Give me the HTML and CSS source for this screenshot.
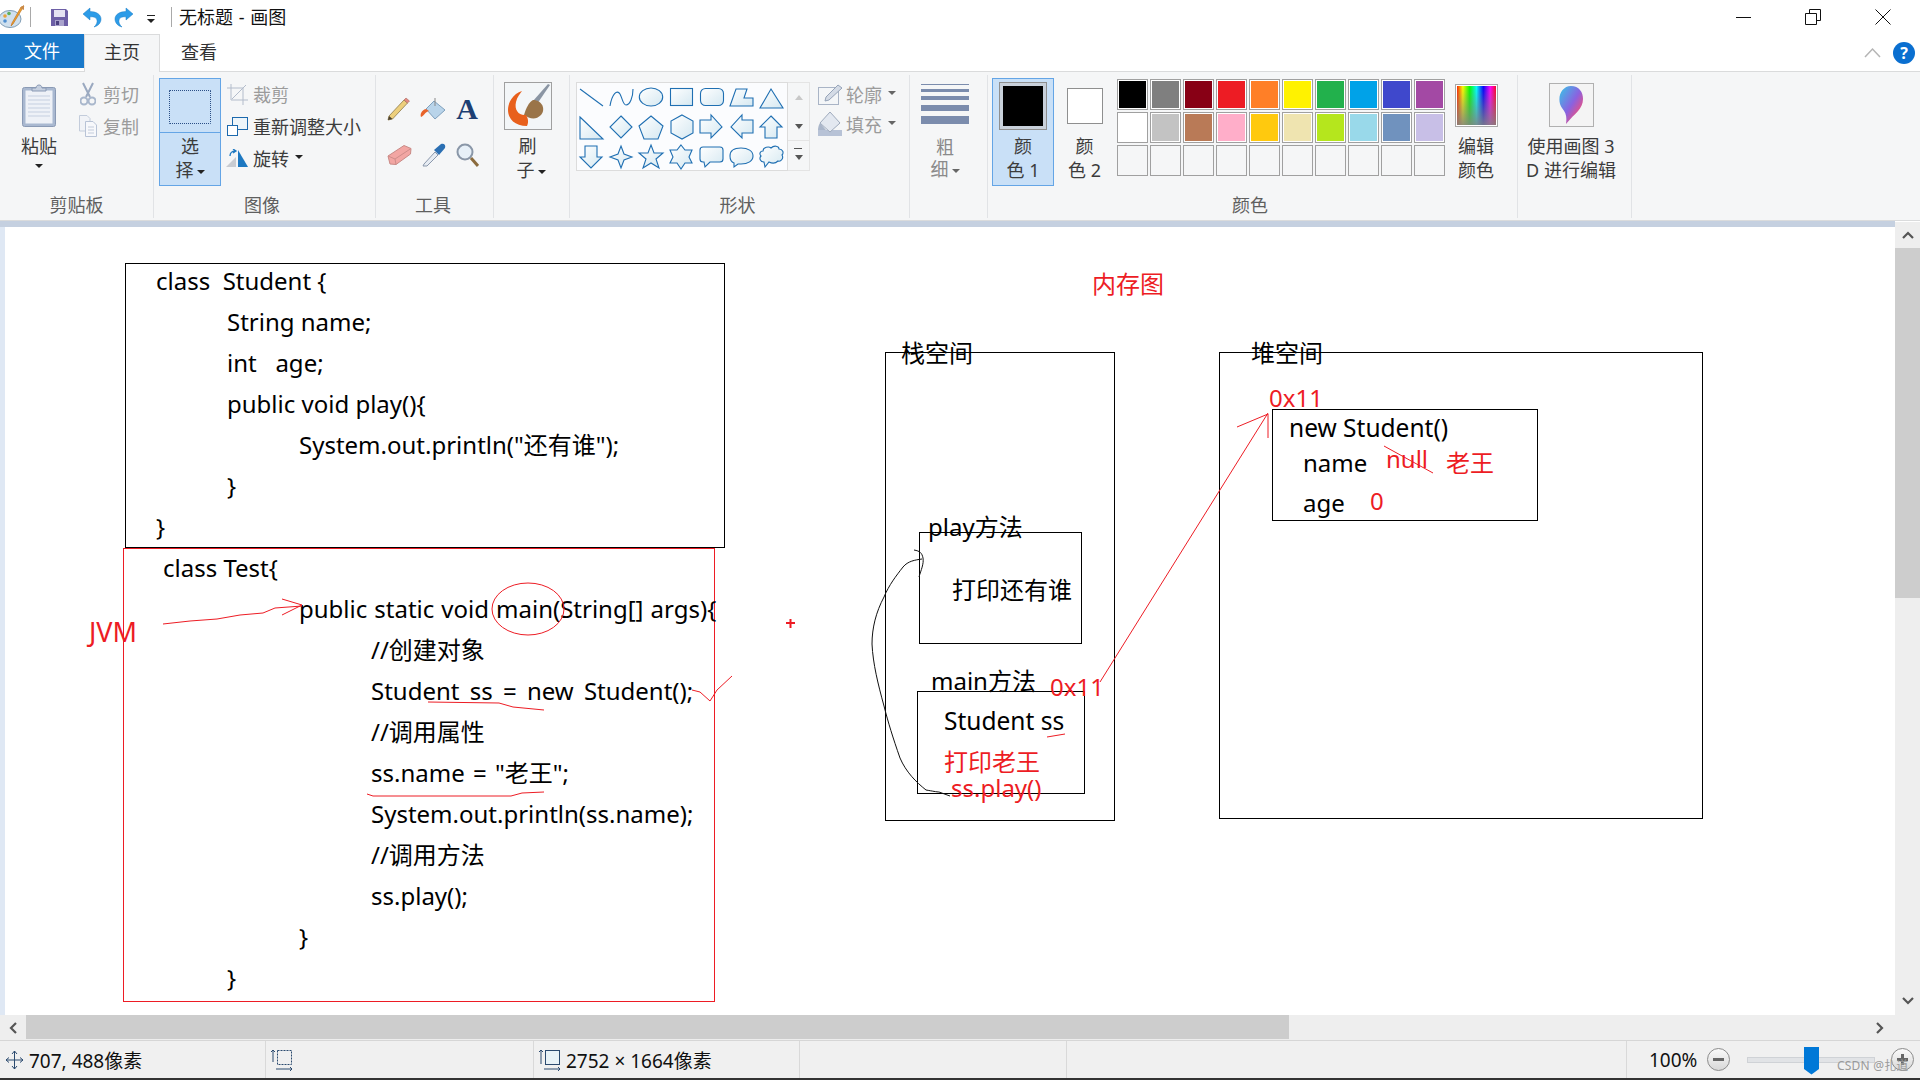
FILE: index.html
```html
<!DOCTYPE html>
<html lang="zh">
<head>
<meta charset="utf-8">
<title>无标题 - 画图</title>
<link rel="stylesheet" href="styles.css">
</head>
<body>
<div class="app">
  <header class="titlebar">
    <svg class="qa-paint" width="26" height="24" viewBox="0 0 26 24"><ellipse cx="10" cy="14" rx="11" ry="8.5" fill="#cfe0ee" stroke="#7f9db5"/><circle cx="5" cy="11" r="1.8" fill="#e8a33a"/><circle cx="9" cy="8.5" r="1.8" fill="#5fae5a"/><circle cx="5" cy="16" r="1.8" fill="#4f8ed0"/><circle cx="11" cy="18" r="1.8" fill="#d8d8e8"/><path d="M24 1 L13 19 L11 21 L12 18 L21 2Z" fill="#f0a030" stroke="#b96a10" stroke-width=".6"/><path d="M20 3 L24 0 L24 5Z" fill="#c98a4a"/></svg>
    <span class="qa-sep qa-sep-a"></span>
    <svg class="qa-save" width="17" height="17" viewBox="0 0 17 17"><path d="M0 0H15L17 2V17H0Z" fill="#6d5fa6"/><rect x="3" y="1" width="11" height="7" fill="#e4e2f2"/><rect x="4" y="11" width="9" height="6" fill="#a9a3cc"/><rect x="5" y="12" width="3" height="4" fill="#4c4180"/></svg>
    <svg class="qa-undo" width="20" height="21" viewBox="0 0 20 21"><path d="M1 7 L8 1 V4.500 C15 4.500 19 8 19 12 C19 16 16 19 12 20 C14.500 18 15.500 15 15 13 C14.500 10.500 12 9.500 8 9.800 V13Z" fill="#2d9ce8" stroke="#1a7cc4" stroke-width=".5"/></svg>
    <svg class="qa-redo" width="20" height="21" viewBox="0 0 20 21"><path d="M19 7 L12 1 V4.500 C5 4.500 1 8 1 12 C1 16 4 19 8 20 C5.500 18 4.500 15 5 13 C5.500 10.500 8 9.500 12 9.800 V13Z" fill="#2d9ce8" stroke="#1a7cc4" stroke-width=".5"/></svg>
    <svg class="qa-drop" width="9" height="10" viewBox="0 0 9 10"><rect x="0" y="0" width="8" height="1" fill="#222"/><path d="M0 4H8L4 8Z" fill="#222"/></svg>
    <span class="qa-sep qa-sep-b"></span>
    <span class="doc-title">无标题 - 画图</span>
    <div class="win-controls">
      <svg width="16" height="16" viewBox="0 0 16 16"><path d="M0 8.500H15" stroke="#111" fill="none"/></svg>
      <svg class="win-restore" width="16" height="16" viewBox="0 0 16 16"><path d="M.5 4.500H11.500V15.500H.5Z M4.500 4.500V.5H15.500V11.500H11.500" stroke="#111" fill="none"/></svg>
      <svg width="16" height="16" viewBox="0 0 16 16"><path d="M.5 .5L15.500 15.500M15.500 .5L.5 15.500" stroke="#111" fill="none"/></svg>
    </div>
  </header>

  <nav class="tabs">
    <span class="tab-file">文件</span>
    <span class="tab-home">主页</span>
    <span class="tab-view">查看</span>
    <div class="tabs-right">
      <svg width="17" height="11" viewBox="0 0 17 11"><path d="M1 10L8.500 2L16 10" stroke="#b5b5b5" stroke-width="1.500" fill="none"/></svg>
      <span class="help">?</span>
    </div>
  </nav>

  <section class="ribbon">
    <div class="group g-clip">
      <div class="body">
        <div class="big paste">
          <svg class="i-paste" width="34" height="43" viewBox="0 0 34 43"><rect x=".5" y="3.500" width="33" height="39" rx="2" fill="#a9b8d0" stroke="#8a9ab5"/><rect x="3.500" y="6.500" width="27" height="33" fill="#eef1f7"/><path d="M6 12H28M6 16H28M6 20H28M6 24H28M6 28H28M6 32H28" stroke="#c5cfe0"/><path d="M10 7V4H14C14 0 20 0 20 4H24V7Z" fill="#c5cfdf" stroke="#8a9ab5"/></svg>
          <span class="big-line">粘贴</span>
          <span class="caret caret-paste"></span>
        </div>
        <div class="small-col col-clip">
          <div class="small off"><span class="ico"><svg width="16" height="24" viewBox="0 0 16 24"><path d="M3 1L10 15M13 1L6 15" stroke="#9aa9c0" stroke-width="2" fill="none"/><circle cx="4" cy="19" r="3.500" fill="none" stroke="#a9b7cc" stroke-width="2"/><circle cx="12" cy="19" r="3.500" fill="none" stroke="#a9b7cc" stroke-width="2"/></svg></span><span>剪切</span></div>
          <div class="small off"><span class="ico"><svg width="18" height="22" viewBox="0 0 18 22"><path d="M.5 .5H8L11 3.500V16H.5Z" fill="#f1f3f7" stroke="#c3ccdb"/><path d="M6.500 6.500H14L17.500 10V21.500H6.500Z" fill="#f7f8fb" stroke="#b8c3d6"/><path d="M9 12H15M9 15H15M9 18H15" stroke="#c3ccdb"/></svg></span><span>复制</span></div>
        </div>
      </div>
      <div class="label">剪贴板</div>
    </div>

    <div class="group g-image">
      <div class="body">
        <div class="select">
          <div class="select-top"><span class="marquee"></span></div>
          <div class="select-bottom"><span class="big-line">选</span><span class="big-line">择<span class="caret caret-inline"></span></span></div>
        </div>
        <div class="small-col col-image">
          <div class="small off"><span class="ico"><svg width="21" height="21" viewBox="0 0 21 21"><path d="M4 0V16H21M0 4H16V21" fill="none" stroke="#b3bccb" stroke-width="1"/><path d="M5 15L19 1" stroke="#b3bccb"/></svg></span><span>裁剪</span></div>
          <div class="small"><span class="ico"><svg width="21" height="19" viewBox="0 0 21 19"><rect x="5.500" y=".5" width="15" height="12" fill="#edf5fa" stroke="#1c69ad"/><rect x=".5" y="8.500" width="10" height="10" fill="#fff" stroke="#1c69ad"/></svg></span><span>重新调整大小</span></div>
          <div class="small"><span class="ico"><svg width="24" height="19" viewBox="0 0 24 19"><path d="M1 18L11 8V18Z" fill="#c9ccd2"/><path d="M13 1V18H23Z" fill="#1d78c1"/><path d="M5 7C5 4 7 2 10 2M8 0L11 2L8 4" fill="none" stroke="#1d78c1" stroke-width="1.300"/></svg></span><span>旋转</span><span class="caret caret-side"></span></div>
        </div>
      </div>
      <div class="label">图像</div>
    </div>

    <div class="group g-tools">
      <div class="body tool-grid">
        <svg width="24" height="24" viewBox="0 0 24 24"><path d="M2 19L17 3L20.500 6L5.500 22L1 23Z" fill="#edcf7c" stroke="#8d7a4a" stroke-width=".8"/><path d="M17 3L19 1L22.500 4L20.500 6Z" fill="#e58a80" stroke="#a8685f" stroke-width=".6"/><path d="M1 23L2 19L5.500 22Z" fill="#4a4030"/></svg>
        <svg width="26" height="24" viewBox="0 0 26 24"><path d="M14 4L25 13L15 22L6 12Z" fill="#b9d4ea" stroke="#7fa0bd"/><path d="M6 12C1 13 0 18 1 20C4 19 5 15 9 14Z" fill="#e8632a"/><path d="M15 1V9" stroke="#888"/></svg>
        <span class="tool-a">A</span>
        <svg width="25" height="22" viewBox="0 0 25 22"><path d="M1 12L17 1.500L24 4.500L23.500 10L9 20.500L3 20Z" fill="#f2a6a3" stroke="#c98a86"/><path d="M1 12L8 15L24 4.500M8 15L9 20.500" fill="none" stroke="#cf8d8a"/></svg>
        <svg width="25" height="24" viewBox="0 0 25 24"><path d="M3 21L14 9L17 12L6 23L2 23Z" fill="#e6ebf2" stroke="#8b98ac"/><path d="M13 7L20 1C23 0 25 2 24 5L18 12Z" fill="#2b6fb3"/></svg>
        <svg width="23" height="24" viewBox="0 0 23 24"><circle cx="9" cy="9" r="7.500" fill="#e7f0f8" stroke="#8a97a8" stroke-width="2"/><path d="M15 15L22 23" stroke="#8b6b3d" stroke-width="3"/></svg>
      </div>
      <div class="label label-tools">工具</div>
    </div>

    <div class="group g-brush">
      <div class="body big-col brush">
        <svg class="i-brush" width="48" height="48" viewBox="0 0 48 48"><rect x=".5" y=".5" width="47" height="47" fill="#f3f6f8" stroke="#a0a0a0"/><path d="M46 3L33 22L29 19L44 2Z" fill="#8a95a3"/><path d="M29 18C38 18 42 27 37 33C31 39 25 36 20 33C22 26 25 20 29 18Z" fill="#9a7448"/><path d="M18 9C9 12 4 20 4 28C4 37 11 44 23 44C25 40 24 36 22 33C15 34 10 28 12 20C13 15 16 12 18 9Z" fill="#e8601c"/></svg>
        <span class="big-line">刷</span>
        <span class="big-line brush-line">子<span class="caret caret-inline"></span></span>
      </div>
      <div class="label">&nbsp;</div>
    </div>

    <div class="group g-shapes">
      <div class="body">
        <div class="gallery">
          <svg class="shape-svg" width="210" height="87" viewBox="0 0 210 87">
            <defs><linearGradient id="sg" x1="0" y1="0" x2="1" y2="1"><stop offset="0" stop-color="#ffffff"/><stop offset="1" stop-color="#d5e8f1"/></linearGradient></defs>
            <g fill="url(#sg)" stroke="#1f6fb2" stroke-width="1.100" transform="translate(-1,-1)">
              <path d="M4 7L27 24" fill="none"/>
              <path d="M34 24C36 12 41 7 44 12C47 18 47 23 50 23C54 23 57 15 57 7" fill="none"/>
              <ellipse cx="75" cy="15" rx="11.700" ry="9"/>
              <rect x="94.500" y="6.500" width="22" height="17"/>
              <rect x="124.500" y="6.500" width="23" height="17" rx="5"/>
              <path d="M154 24L160 7H171L168 16H177V24Z"/>
              <path d="M195 7L207 26H184Z"/>
              <path d="M4 35L27 57H4Z"/>
              <path d="M45 34L56 45L45 56L34 45Z"/>
              <path d="M75 34L87 44L82 57H68L63 44Z"/>
              <path d="M106 33L117 39V51L106 57L95 51V39Z"/>
              <path d="M124 38H135V33L146 45L135 56V51H124Z"/>
              <path d="M177 38H166V33L155 45L166 56V51H177Z"/>
              <path d="M195 34L206 45H201V56H189V45H184Z"/>
              <path d="M9 64H21V75H26L15 86L4 75H9Z"/>
              <path d="M45 64L48 72L56 75L48 78L45 86L42 78L34 75L42 72Z"/>
              <path d="M75 63L78 71L87 71L80 77L83 86L75 81L67 86L70 77L63 71L72 71Z"/>
              <path d="M105 63L109 68H116L113 75L116 81H109L105 87L101 81H94L97 75L94 68H101Z"/>
              <path d="M127 65H144Q147 65 147 68V77Q147 80 144 80H134L129 85L128 80H127Q124 80 124 77V68Q124 65 127 65Z"/>
              <path d="M165 66C172 66 177 69 177 74C177 79 172 82 165 82C164 82 163 82 162 82L158 85L158 81C155 80 154 77 154 74C154 69 158 66 165 66Z"/>
              <path d="M187 69C187 65 193 64 195 66C198 63 203 64 203 67C207 67 208 71 206 73C208 76 205 80 202 79C199 82 195 81 193 80L189 85L188 80C184 80 183 76 185 74C183 72 184 69 187 69Z"/>
            </g>
          </svg>
        </div>
        <div class="gallery-scroll">
          <span class="gs gs-up"></span>
          <span class="gs gs-down"></span>
          <span class="gs gs-more"></span>
        </div>
        <div class="small-col col-shape">
          <div class="small off"><span class="ico"><svg width="24" height="21" viewBox="0 0 24 21"><rect x=".5" y="3.500" width="20" height="17" fill="#f4f6f8" stroke="#a9b4c6"/><path d="M7 17L8 13L20 1L24 4L11 16Z" fill="#d4dbe6" stroke="#95a3b8"/></svg></span><span>轮廓</span><span class="caret caret-side caret-grey"></span></div>
          <div class="small off"><span class="ico"><svg width="24" height="24" viewBox="0 0 24 24"><rect x="0" y="18" width="24" height="6" fill="#b7c2d6"/><path d="M12 0L22 11L12 20L2 11Z" fill="#e3e8f0" stroke="#9eaabc"/><path d="M2 11C0 14 0 18 0 18H8Z" fill="#aab6ca"/></svg></span><span>填充</span><span class="caret caret-side caret-grey"></span></div>
        </div>
      </div>
      <div class="label">形状</div>
    </div>

    <div class="group g-size">
      <div class="body big-col size">
        <div class="size-lines"><i class="s1"></i><i class="s2"></i><i class="s3"></i><i class="s4"></i><i class="s5"></i></div>
        <span class="big-line off-text">粗</span>
        <span class="big-line off-text size-line2">细<span class="caret caret-inline caret-grey"></span></span>
      </div>
      <div class="label">&nbsp;</div>
    </div>

    <div class="group g-colors">
      <div class="body">
        <div class="color-btn active">
          <span class="frame frame-1"><span class="fill-black"></span></span>
          <span class="big-line">颜</span>
          <span class="big-line">色 1</span>
        </div>
        <div class="color-btn second">
          <span class="frame frame-2"></span>
          <span class="big-line">颜</span>
          <span class="big-line">色 2</span>
        </div>
        <div class="palette">
          <span class="c c01"></span><span class="c c02"></span><span class="c c03"></span><span class="c c04"></span><span class="c c05"></span><span class="c c06"></span><span class="c c07"></span><span class="c c08"></span><span class="c c09"></span><span class="c c10"></span>
          <span class="c c11"></span><span class="c c12"></span><span class="c c13"></span><span class="c c14"></span><span class="c c15"></span><span class="c c16"></span><span class="c c17"></span><span class="c c18"></span><span class="c c19"></span><span class="c c20"></span>
          <span class="c"></span><span class="c"></span><span class="c"></span><span class="c"></span><span class="c"></span><span class="c"></span><span class="c"></span><span class="c"></span><span class="c"></span><span class="c"></span>
        </div>
        <div class="big-col edit">
          <span class="rainbow"></span>
          <span class="big-line">编辑</span>
          <span class="big-line">颜色</span>
        </div>
      </div>
      <div class="label label-colors">颜色</div>
    </div>

    <div class="group g-3d">
      <div class="body big-col p3d">
        <span class="p3d-frame"><svg width="26" height="40" viewBox="0 0 26 40"><defs><linearGradient id="drop" x1="0" y1="0" x2="1" y2="1"><stop offset="0" stop-color="#35c8e8"/><stop offset=".5" stop-color="#8a62e0"/><stop offset=".8" stop-color="#ec4f80"/><stop offset="1" stop-color="#f09a20"/></linearGradient></defs><path d="M13 1C21 1 25 7 25 14C25 24 17 28 8 39C9 31 8 28 4 23C-2 14 3 1 13 1Z" fill="url(#drop)"/></svg></span>
        <span class="big-line">使用画图 3</span>
        <span class="big-line">D 进行编辑</span>
      </div>
      <div class="label">&nbsp;</div>
    </div>
  </section>

  <main class="workspace">
    <div class="viewport">
      <div class="band"></div>
      <div class="canvas-wrap">
        <div class="strip"></div>
        <div class="canvas">
          <div class="box code-a">
            <p class="ln in0">class&nbsp; Student {</p>
            <p class="ln in1">String name;</p>
            <p class="ln in1">int&nbsp;&nbsp; age;</p>
            <p class="ln in1">public void play(){</p>
            <p class="ln in2">System.out.println("还有谁");</p>
            <p class="ln in1">}</p>
            <p class="ln in0">}</p>
          </div>
          <div class="box code-b">
            <p class="ln b0">class Test{</p>
            <p class="ln in2b ws-pub">public static void main(String[] args){</p>
            <p class="ln in3">//创建对象</p>
            <p class="ln in3 ws-new">Student ss = new Student();</p>
            <p class="ln in3">//调用属性</p>
            <p class="ln in3 ws-name">ss.name = "老王";</p>
            <p class="ln in3">System.out.println(ss.name);</p>
            <p class="ln in3">//调用方法</p>
            <p class="ln in3">ss.play();</p>
            <p class="ln in2b">}</p>
            <p class="ln in1b">}</p>
          </div>
          <div class="box stack"></div>
          <div class="box play"></div>
          <div class="box mainm"></div>
          <div class="box heap"></div>
          <div class="box obj"></div>

          <span class="t red t-mem">内存图</span>
          <span class="t t-stack">栈空间</span>
          <span class="t t-play">play方法</span>
          <span class="t t-print">打印还有谁</span>
          <span class="t t-main">main方法</span>
          <span class="t red t-ref">0x11</span>
          <span class="t t-ss">Student ss</span>
          <span class="t red t-laow">打印老王</span>
          <span class="t red t-call">ss.play()</span>
          <span class="t t-heap">堆空间</span>
          <span class="t red t-addr">0x11</span>
          <span class="t t-new">new Student()</span>
          <span class="t t-name">name</span>
          <span class="t red t-null">null</span>
          <span class="t red t-val">老王</span>
          <span class="t t-age">age</span>
          <span class="t red t-zero">0</span>
          <span class="t red t-jvm">JVM</span>

          <svg class="ink" width="1890" height="788" viewBox="5 227 1890 788">
            <g fill="none" stroke="#ed1c24" stroke-width="1">
              <path d="M163 624L190 621L217 619L240 615L263 613L275 608L302 606"/>
              <path d="M282 599L302 605L282 615"/>
              <ellipse cx="528" cy="609" rx="36" ry="26"/>
              <path d="M428 702L499 703L513 707L544 710"/>
              <path d="M692 690L700 692L710 701L717 690L732 676"/>
              <path d="M367 794L373 796L511 796L522 793L544 792"/>
              <path d="M786 623H795M790.500 619V628" stroke-width="2"/>
              <path d="M1100 682L1268 413"/>
              <path d="M1237 427L1268 414L1268 438"/>
              <path d="M1384 446L1433 473"/>
              <path d="M1047 737L1065 734"/>
            </g>
            <path d="M914 550C920 551 922 553 923 558C924 564 921 570 919 577M922 559C915 560 908 561 903 567C896 576 889 585 884 597C876 612 872 628 872 644C873 664 878 684 884 706C888 722 893 738 900 758C906 772 916 782 926 790C932 791 937 792 939 792L950 796" fill="none" stroke="#111" stroke-width="1"/>
          </svg>
        </div>
      </div>
    </div>
    <aside class="vbar">
      <span class="vbar-arrow vbar-up"><svg width="12" height="8" viewBox="0 0 12 8"><path d="M1 7L6 2L11 7" stroke="#555" stroke-width="2.200" fill="none"/></svg></span>
      <span class="vbar-thumb"></span>
      <span class="vbar-rest"></span>
      <span class="vbar-arrow vbar-down"><svg width="12" height="8" viewBox="0 0 12 8"><path d="M1 1L6 6L11 1" stroke="#555" stroke-width="2.200" fill="none"/></svg></span>
    </aside>
  </main>

  <div class="hbar">
    <span class="hbar-arrow"><svg width="8" height="12" viewBox="0 0 8 12"><path d="M7 1L2 6L7 11" stroke="#555" stroke-width="2.200" fill="none"/></svg></span>
    <span class="hbar-thumb"></span>
    <span class="hbar-rest"></span>
    <span class="hbar-arrow hbar-r"><svg width="8" height="12" viewBox="0 0 8 12"><path d="M1 1L6 6L1 11" stroke="#555" stroke-width="2.200" fill="none"/></svg></span>
  </div>

  <footer class="status">
    <div class="st st-pos"><svg width="19" height="20" viewBox="0 0 19 20"><path d="M9.500 1V19M1 10H18M7 4L9.500 1L12 4M7 16L9.500 19L12 16M4 7.500L1 10L4 12.500M15 7.500L18 10L15 12.500" fill="none" stroke="#2b4a6f"/></svg><span>707, 488像素</span></div>
    <div class="st st-sel"><svg width="23" height="22" viewBox="0 0 23 22"><path d="M3 1V13M1 3L3 1L5 3M6 20H22M20 18L22 20L20 22" fill="none" stroke="#2b4a6f"/><rect x="7.500" y="1.500" width="14" height="14" fill="none" stroke="#2b4a6f" stroke-dasharray="2 1"/></svg></div>
    <div class="st st-size"><svg width="23" height="22" viewBox="0 0 23 22"><path d="M3 1V15M1 3L3 1L5 3M6 20H22M20 18L22 20L20 22" fill="none" stroke="#2b4a6f"/><rect x="7.500" y="1.500" width="14" height="14" fill="#e8f2f7" stroke="#2b4a6f"/></svg><span>2752 × 1664像素</span></div>
    <div class="st st-blank"></div>
    <div class="st st-fill"></div>
    <div class="st st-zoom">
      <span class="zoom-pct">100%</span>
      <span class="zbtn"><i class="minus"></i></span>
      <span class="track"><span class="thumb"></span></span>
      <span class="zbtn"><i class="minus"></i><i class="vert"></i></span>
      <span class="mark">CSDN @扎道</span>
    </div>
  </footer>
  <div class="foot"></div>
</div>
</body>
</html>
```
FILE: styles.css
```css
* { box-sizing: border-box; }
html, body { margin: 0; padding: 0; }
body { font-family: "Noto Sans", "Noto Sans CJK SC", sans-serif; color: #333; background: #fff; overflow: hidden; }
.app { width: 1920px; height: 1080px; display: flex; flex-direction: column; overflow: hidden; }
svg { display: block; flex: none; }

/* Title bar */
.titlebar { height: 34px; display: flex; align-items: center; background: #fff; flex: none; }
.qa-sep { width: 1px; height: 20px; background: #a9a9a9; }
.qa-sep-a { margin-left: 4px; }
.qa-save { margin-left: 20px; }
.qa-undo { margin-left: 14px; }
.qa-redo { margin-left: 12px; }
.qa-drop { margin-left: 13px; margin-top: 6px; }
.qa-sep-b { margin-left: 15px; }
.doc-title { margin-left: 7px; font-size: 18px; line-height: 34px; color: #111; white-space: nowrap; word-spacing: 1px; }
.win-controls { margin-left: auto; display: flex; gap: 53.500px; padding-right: 29px; align-items: center; }
.win-restore { margin-left: -1px; margin-right: 1px; }

/* Tabs */
.tabs { height: 37px; display: flex; align-items: flex-start; background: #fff; flex: none; font-size: 18px; position: relative; }
.tab-file { width: 84px; height: 34px; background: #1979ca; color: #fff; text-align: center; line-height: 34px; }
.tab-home { width: 76px; height: 38px; background: #f5f6f7; border: 1px solid #dadbdc; border-bottom: 0; text-align: center; line-height: 34px; color: #333; position: relative; z-index: 2; }
.tab-view { width: 78px; text-align: center; line-height: 36px; color: #333; }
.tabs-right { margin-left: auto; display: flex; align-items: center; gap: 12px; padding-right: 5px; height: 37px; }
.help { width: 22px; height: 22px; border-radius: 50%; background: #0a6fd0; color: #fff; font-size: 16px; font-weight: 700; text-align: center; line-height: 22px; }

/* Ribbon */
.ribbon { height: 150px; flex: none; display: flex; background: #f5f6f7; border-top: 1px solid #dadbdc; border-bottom: 1px solid #dadbdc; padding-top: 3px; font-size: 18px; color: #3c3c3c; }
.group { display: flex; flex-direction: column; height: 143px; border-right: 1px solid #e1e3e6; flex: none; }
.body { height: 119px; display: flex; flex: none; }
.label { height: 22px; line-height: 22px; text-align: center; font-size: 18px; color: #5f5f5f; }
.g-clip { width: 154px; }
.g-image { width: 222px; }
.g-tools { width: 118px; }
.g-brush { width: 76px; }
.g-shapes { width: 340px; }
.g-size { width: 78px; }
.g-colors { width: 530px; }
.g-3d { width: 114px; }
.g-image .label { padding-right: 5px; }
.g-shapes .label { padding-right: 4px; }
.label-tools { padding-right: 3px; }
.label-colors { padding-right: 5px; }
.big-line { display: block; line-height: 24px; height: 24px; white-space: nowrap; text-align: center; }
.big { display: flex; flex-direction: column; align-items: center; }
.big-col { display: flex; flex-direction: column; align-items: center; }
.paste { width: 78px; padding-top: 9px; }
.i-paste { margin-bottom: 7px; }
.caret { display: inline-block; width: 0; height: 0; border-left: 4px solid transparent; border-right: 4px solid transparent; border-top: 4px solid #222; }
.caret-paste { margin-top: 6px; }
.caret-inline { position: relative; margin-left: 3px; top: -3px; }
.caret-side { margin-bottom: 2px; }
.caret-grey { border-top-color: #666; }
.small-col { display: flex; flex-direction: column; padding-top: 3px; }
.small { display: flex; align-items: center; height: 32px; white-space: nowrap; gap: 4px; }
.small .ico { width: 24px; display: flex; justify-content: center; flex: none; }
.small.off { color: #9b9b9b; }
.col-clip .small { gap: 1px; }
.col-clip .small .ico { width: 24px; padding-right: 4px; }
.col-image { margin-left: 4px; }
.small .caret-side { margin-left: 2px; }
.select { width: 62px; height: 108px; margin: 3px 0 0 5px; background: #c9e0f7; border: 1px solid #64a5e6; display: flex; flex-direction: column; }
.select-top { height: 54px; border-bottom: 1px solid #64a5e6; display: flex; align-items: center; justify-content: center; padding-top: 3px; }
.marquee { width: 42px; height: 34px; border: 1px dotted #2b4f86; border-radius: 1px; background: #c9e0f7; }
.select-bottom { padding-top: 1px; }
.tool-grid { display: grid; grid-template-columns: repeat(3, 34px); grid-template-rows: 46px 46px; padding: 11px 0 0 6px; place-items: center; align-content: start; }
.tool-a { font-family: "Liberation Serif", serif; font-weight: 700; font-size: 30px; line-height: 30px; color: #1d3f73; }
.brush { width: 67px; padding-top: 4px; }
.i-brush { margin-top: 3px; margin-bottom: 4px; }
.brush-line { padding-left: 7px; }
.gallery { width: 212px; height: 89px; margin: 7px 0 0 6px; background: #fbfcfe; border: 1px solid #dcdcdc; flex: none; }
.gallery-scroll { width: 22px; height: 89px; margin-top: 7px; display: flex; flex-direction: column; border: 1px solid #e4e4e4; border-left: 0; flex: none; }
.gs { flex: 1; display: flex; align-items: center; justify-content: center; position: relative; }
.gs::after { content: ""; border-left: 4px solid transparent; border-right: 4px solid transparent; }
.gs-up::after { border-bottom: 5px solid #c8c8c8; }
.gs-down::after { border-top: 5px solid #555; }
.gs-more { border-top: 1px solid #e4e4e4; }
.gs-more::after { border-top: 5px solid #555; margin-top: 4px; }
.gs-more::before { content: ""; position: absolute; top: 7px; left: 6px; width: 8px; height: 1px; background: #555; }
.col-shape { margin-left: 8px; padding-top: 4px; }
.col-shape .small { height: 30px; }
.size { width: 70px; }
.size-lines { width: 48px; margin: 9px 0 0 0; height: 50px; display: flex; flex-direction: column; }
.size-lines i { display: block; background: #7b8cad; flex: none; }
.s1 { height: 1px; margin-bottom: 4px; }
.s2 { height: 3px; margin-bottom: 4px; }
.s3 { height: 4px; margin-bottom: 5px; }
.s4 { height: 6px; margin-bottom: 5px; }
.s5 { height: 8px; }
.off-text { color: #8a8a8a; }
.size-lines + .big-line { margin-top: 1px; }
.size-line2 { margin-top: -2px; }
.color-btn { display: flex; flex-direction: column; align-items: center; height: 108px; margin-top: 3px; }
.color-btn.active { width: 62px; margin-left: 4px; background: #c9e0f7; border: 1px solid #64a5e6; }
.color-btn.second { width: 61px; }
.frame { display: block; border: 1px solid #8f8f8f; background: #fff; }
.frame-1 { width: 48px; height: 48px; margin-top: 3px; margin-bottom: 4px; padding: 3px; background: #c8d0da; }
.fill-black { display: block; width: 100%; height: 100%; background: #000; }
.frame-2 { width: 36px; height: 36px; margin-top: 10px; margin-bottom: 10px; }
.palette { display: grid; grid-template-columns: repeat(10, 31px); grid-auto-rows: 31px; gap: 2px; width: 328px; margin: 4px 0 0 2px; align-content: start; flex: none; }
.c { border: 1px solid #a0a0a0; background: #f5f6f7; background-clip: padding-box; display: block; }
.c01,.c02,.c03,.c04,.c05,.c06,.c07,.c08,.c09,.c10,.c11,.c12,.c13,.c14,.c15,.c16,.c17,.c18,.c19,.c20 { outline: 1px solid #fff; outline-offset: -2px; }
.c01 { background-color: #000; } .c02 { background-color: #7f7f7f; } .c03 { background-color: #880015; } .c04 { background-color: #ed1c24; } .c05 { background-color: #ff7f27; }
.c06 { background-color: #fff200; } .c07 { background-color: #22b14c; } .c08 { background-color: #00a2e8; } .c09 { background-color: #3f48cc; } .c10 { background-color: #a349a4; }
.c11 { background-color: #fff; } .c12 { background-color: #c3c3c3; } .c13 { background-color: #b97a57; } .c14 { background-color: #ffaec9; } .c15 { background-color: #ffc90e; }
.c16 { background-color: #efe4b0; } .c17 { background-color: #b5e61d; } .c18 { background-color: #99d9ea; } .c19 { background-color: #7092be; } .c20 { background-color: #c8bfe7; }
.edit { width: 62px; }
.rainbow { display: block; width: 43px; height: 43px; margin: 9px 0 7px; border: 1px solid #a8a8a8; outline: 1px solid #fff; outline-offset: -2px; background: linear-gradient(to bottom, rgba(130,130,130,0) 0%, rgba(130,130,130,.9) 100%), linear-gradient(to right, #ff0000, #ffff00, #00ff00, #00ffff, #0000ff, #ff00ff, #ff0000); }
.p3d { width: 106px; }
.p3d-frame { display: flex; align-items: center; justify-content: center; width: 45px; height: 44px; margin: 8px 0 7px; border: 1px solid #b0b0b0; background: #f4f4f4; }

/* Workspace */
.workspace { height: 794px; display: flex; flex: none; }
.viewport { width: 1895px; display: flex; flex-direction: column; }
.band { height: 6px; background: #c5d0e0; flex: none; }
.canvas-wrap { height: 788px; display: flex; }
.strip { width: 5px; background: #dfe8f4; flex: none; }
.canvas { width: 1890px; height: 788px; background: #fff; position: relative; overflow: hidden; }
.ink { position: absolute; left: 0; top: 0; pointer-events: none; }
.vbar { width: 25px; background: #eeeeee; display: flex; flex-direction: column; border-top: 1px solid #fff; }
.vbar-arrow { height: 25px; display: flex; align-items: center; justify-content: center; flex: none; }
.vbar-up { height: 26px; }
.vbar-down { padding-bottom: 3px; }
.vbar-thumb { height: 350px; background: #cdcdcd; flex: none; }
.vbar-rest { flex: 1; }
.hbar { height: 25px; display: flex; background: #eeeeee; flex: none; }
.hbar-arrow { width: 26px; display: flex; align-items: center; justify-content: center; flex: none; }
.hbar-thumb { width: 1263px; background: #cdcdcd; height: 24px; flex: none; }
.hbar-rest { flex: 1; }
.hbar-r { margin-right: 27px; }

/* Canvas content */
.box { position: absolute; border: 1px solid #000; }
.code-a { left: 120px; top: 36px; width: 600px; height: 285px; }
.code-b { left: 118px; top: 321px; width: 592px; height: 454px; border-color: #ed1c24; }
.ln { margin: 0; height: 41px; line-height: 41px; font-size: 24px; color: #000; white-space: nowrap; position: relative; top: -2px; }
.code-a .ln { top: -4px; }
.ws-pub { word-spacing: .8px; }
.ws-new { word-spacing: 4px; }
.ws-name { word-spacing: 2px; }
.in0 { padding-left: 30px; }
.in1 { padding-left: 101px; }
.in2 { padding-left: 173px; }
.b0 { padding-left: 39px; }
.in1b { padding-left: 103px; }
.in2b { padding-left: 175px; }
.in3 { padding-left: 247px; }
.stack { left: 880px; top: 125px; width: 230px; height: 469px; }
.play { left: 914px; top: 305px; width: 163px; height: 112px; }
.mainm { left: 912px; top: 464px; width: 168px; height: 103px; }
.heap { left: 1214px; top: 125px; width: 484px; height: 467px; }
.obj { left: 1267px; top: 182px; width: 266px; height: 112px; }
.t { position: absolute; font-size: 24px; line-height: 30px; color: #000; white-space: nowrap; }
.red { color: #ed1c24; }
.t-mem { left: 1087px; top: 42px; }
.t-stack { left: 896px; top: 111px; }
.t-play { left: 923px; top: 285px; }
.t-print { left: 947px; top: 348px; }
.t-main { left: 926px; top: 439px; }
.t-ref { left: 1045px; top: 445px; }
.t-ss { left: 939px; top: 479px; font-size: 24.500px; }
.t-laow { left: 939px; top: 523px; line-height: 24px; }
.t-call { left: 946px; top: 549px; line-height: 24px; }
.t-heap { left: 1246px; top: 111px; }
.t-addr { left: 1264px; top: 156px; }
.t-new { left: 1284px; top: 186px; font-size: 24.500px; }
.t-name { left: 1298px; top: 221px; }
.t-null { left: 1381px; top: 217px; }
.t-val { left: 1441px; top: 221px; }
.t-age { left: 1298px; top: 261px; }
.t-zero { left: 1365px; top: 259px; }
.t-jvm { left: 84px; top: 390px; font-size: 27px; }

/* Status bar */
.status { height: 38px; display: flex; background: #f0f0f0; border-top: 1px solid #d6d6d6; font-size: 19px; color: #111; flex: none; }
.st { display: flex; align-items: center; height: 100%; border-right: 1px solid #d9d9d9; flex: none; white-space: nowrap; }
.st-pos { width: 266px; padding-left: 5px; gap: 5px; }
.st-sel { width: 268px; padding-left: 4px; }
.st-size { width: 266px; padding-left: 4px; gap: 5px; }
.st-blank { width: 267px; }
.st-fill { width: 560px; }
.st-zoom { flex: 1; border-right: 0; position: relative; padding-left: 22px; }
.zoom-pct { font-size: 19px; width: 58px; }
.zbtn { width: 23px; height: 23px; border-radius: 50%; border: 1px solid #8c8c8c; background: linear-gradient(#fafafa, #d8d8d8); position: relative; display: block; flex: none; }
.minus { position: absolute; left: 5px; top: 9px; width: 11px; height: 3px; background: #666; }
.vert { position: absolute; left: 9px; top: 5px; width: 3px; height: 11px; background: #666; }
.track { width: 128px; height: 6px; margin: 0 16px 0 17px; background: #e1e3e6; border: 1px solid #cfd2d6; position: relative; flex: none; display: block; }
.thumb { position: absolute; left: 56px; top: -11px; width: 15px; height: 28px; background: #0078d7; clip-path: polygon(0 0, 100% 0, 100% 80%, 50% 100%, 0 80%); }
.mark { position: absolute; left: 210px; top: 15px; font-size: 12px; color: #9a9a9a; letter-spacing: .2px; }
.foot { flex: 1; background: #333; }
```
